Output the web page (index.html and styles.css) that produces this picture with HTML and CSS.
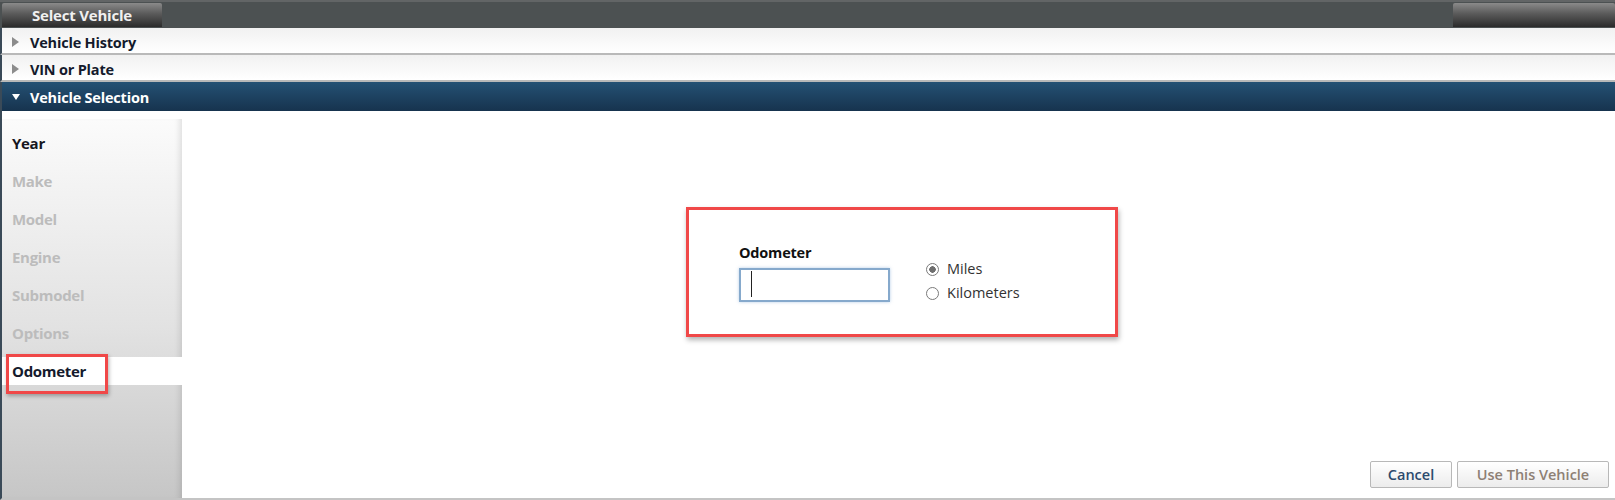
FILE: index.html
```html
<!DOCTYPE html>
<html lang="en">
<head>
    <meta charset="UTF-8">
    <title>Select Vehicle</title>
    <link rel="stylesheet" href="styles.css">
</head>
<body>
    <div class="app">
        <!-- window tabs -->
        <div class="topbar">
            <div class="tab">Select Vehicle</div>
            <div class="tab tab-end"></div>
        </div>

        <!-- accordion headers -->
        <div class="acc-row">Vehicle History</div>
        <div class="acc-row">VIN or Plate</div>
        <div class="acc-row open">Vehicle Selection</div>

        <div class="panel">
            <ul class="steps">
                <li class="done">Year</li>
                <li>Make</li>
                <li>Model</li>
                <li>Engine</li>
                <li>Submodel</li>
                <li>Options</li>
                <li class="current">Odometer</li>
            </ul>

            <div class="main">
                <div class="odo-box">
                    <div class="field">
                        <label class="field-label" for="odo">Odometer</label>
                        <span class="input-wrap">
                            <input id="odo" type="text" class="odo-input">
                            <span class="caret"></span>
                        </span>
                    </div>
                    <div class="units">
                        <label class="radio"><input type="radio" name="unit" checked> Miles</label>
                        <label class="radio"><input type="radio" name="unit"> Kilometers</label>
                    </div>
                </div>

                <div class="actions">
                    <button class="btn btn-cancel">Cancel</button>
                    <button class="btn btn-use" disabled>Use This Vehicle</button>
                </div>
            </div>
        </div>
    </div>
</body>
</html>
```

FILE: styles.css
```css
/* base */
body {
    margin: 0;
    font-family: "Open Sans", "DejaVu Sans", sans-serif;
    background: #fff;
}

.app {
    width: 1615px;
    height: 500px;
    display: flex;
    flex-direction: column;
    box-sizing: border-box;
    overflow: hidden;
}

/* top tab strip */
.topbar {
    height: 28px;
    box-sizing: border-box;
    display: flex;
    justify-content: space-between;
    background: #4c5152;
    border-top: 2px solid #626566;
    padding: 1px 0 1px 2px;
}

.tab {
    width: 160px;
    background: linear-gradient(#8a8a8a, #5a5a5a 45%, #2b2b2b);
    color: #f0f0f0;
    font-weight: bold;
    font-size: 15px;
    line-height: 25px;
    text-align: center;
    letter-spacing: -0.2px;
    border-radius: 2px 2px 0 0;
}

.tab-end {
    width: 162px;
}

/* accordion rows */
.acc-row {
    position: relative;
    height: 27px;
    box-sizing: border-box;
    border-left: 2px solid #3a4a58;
    border-bottom: 2px solid #b9b9b9;
    background: linear-gradient(#f1f1f1, #ffffff);
    padding: 2px 0 0 28px;
    font-size: 14.5px;
    font-weight: bold;
    line-height: 25px;
    color: #141a2c;
    letter-spacing: -0.2px;
}

.acc-row::before {
    content: "";
    position: absolute;
    left: 10px;
    top: 9px;
    border-left: 7px solid #8c8c8c;
    border-top: 5px solid transparent;
    border-bottom: 5px solid transparent;
}

.acc-row.open {
    height: 29px;
    border-bottom: 0;
    background: linear-gradient(#255174, #16334e);
    color: #fff;
    line-height: 27px;
}

.acc-row.open::before {
    left: 10px;
    top: 12px;
    border-top: 6px solid #fff;
    border-left: 4px solid transparent;
    border-right: 4px solid transparent;
    border-bottom: 0;
}

/* body: step list + form */
.panel {
    flex: 1;
    display: flex;
    border-left: 2px solid #3a4a58;
    border-bottom: 2px solid #c4c4c4;
}

.steps {
    list-style: none;
    margin: 8px 0 0;
    padding: 10px 0 0;
    width: 180px;
    background: linear-gradient(#fbfbfb, #e2e2e2 55%, #c6c6c6);
    box-shadow: inset -6px 0 6px -4px rgba(0, 0, 0, 0.12);
}

.steps li {
    position: relative;
    height: 28px;
    line-height: 28px;
    margin-bottom: 10px;
    padding-left: 10px;
    font-size: 15px;
    font-weight: bold;
    color: #bcbcbc;
    letter-spacing: -0.3px;
}

.steps li.done {
    color: #16161e;
}

.steps li.current {
    color: #141a2c;
    background: #fff;
}

/* highlight frame around the active step */
.steps li.current::after {
    content: "";
    position: absolute;
    left: 4px;
    top: -3px;
    width: 96px;
    height: 34px;
    border: 3px solid #f04848;
    box-shadow: 1px 2px 4px rgba(0, 0, 0, 0.3);
}

.main {
    flex: 1;
    display: flex;
    flex-direction: column;
    align-items: center;
    padding-top: 96px;
    position: relative;
}

.odo-box {
    width: 432px;
    height: 130px;
    box-sizing: border-box;
    border: 3px solid #f04848;
    box-shadow: 1px 3px 5px rgba(0, 0, 0, 0.3);
    display: flex;
    padding: 34px 0 0 50px;
    margin-left: 7px;
}

.field {
    display: flex;
    flex-direction: column;
}

.field-label {
    font-size: 14.5px;
    font-weight: bold;
    color: #111;
    letter-spacing: -0.2px;
    line-height: 18px;
    margin-bottom: 6px;
}

.input-wrap {
    position: relative;
}

.odo-input {
    width: 151px;
    height: 34px;
    box-sizing: border-box;
    border: 2px solid #86a9cc;
    box-shadow: 0 0 3px rgba(110, 160, 210, 0.5);
    outline: none;
    margin: 0;
}

.caret {
    position: absolute;
    left: 12px;
    top: 3px;
    width: 1px;
    height: 26px;
    background: #222;
}

.units {
    display: flex;
    flex-direction: column;
    gap: 4px;
    margin: 15px 0 0 36px;
}

.radio {
    display: flex;
    align-items: center;
    gap: 4px;
    font-size: 14.5px;
    color: #333;
    line-height: 20px;
}

.radio input {
    appearance: none;
    width: 13px;
    height: 13px;
    margin: 0 4px 0 0;
    border: 1px solid #7a7a7a;
    border-radius: 50%;
    background: #fff;
    position: relative;
}

.radio input:checked {
    background: radial-gradient(#6e6e6e 0 3px, #fff 3.5px);
}

.actions {
    position: absolute;
    right: 6px;
    bottom: 10px;
    display: flex;
    gap: 5px;
}

.btn {
    height: 27px;
    box-sizing: border-box;
    border: 1px solid #b8b8b8;
    border-radius: 2px;
    background: linear-gradient(#ffffff, #ececec);
    font-family: "Open Sans", "DejaVu Sans", sans-serif;
    font-size: 14.5px;
    font-weight: 600;
    padding: 0;
}

.btn-cancel {
    width: 82px;
    color: #2c4a6e;
}

.btn-use {
    width: 152px;
    color: #8d8074;
}
```
